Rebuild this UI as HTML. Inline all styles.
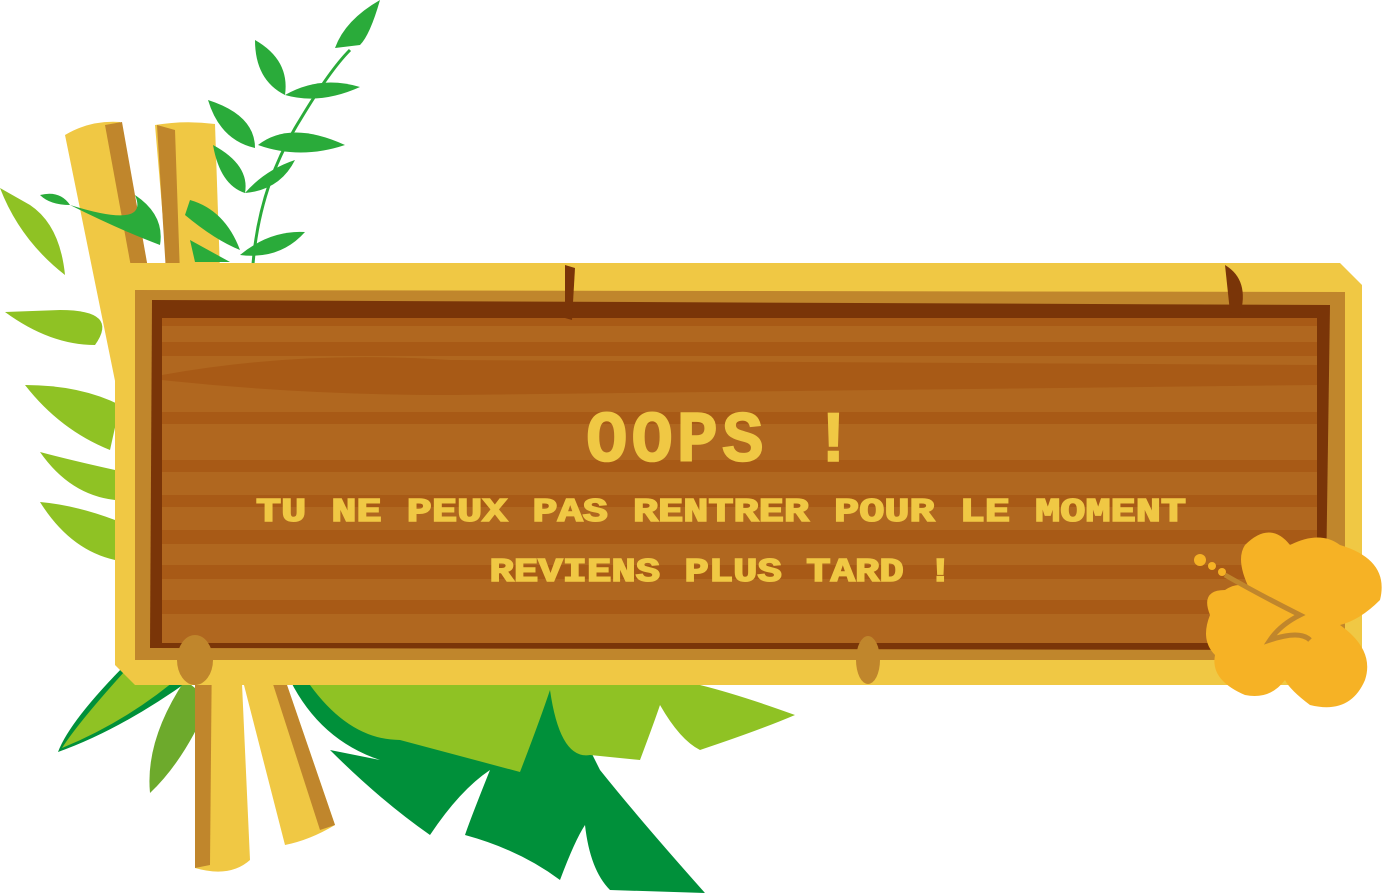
<!DOCTYPE html>
<html><head><meta charset="utf-8"><style>
html,body{margin:0;padding:0;background:#fff;width:1386px;height:896px;overflow:hidden}
svg{display:block}
text{font-family:"Liberation Mono","DejaVu Sans Mono",monospace;font-weight:bold;fill:#f0c844;stroke:#f0c844;stroke-width:1.5;text-anchor:middle}
</style></head><body>
<svg width="1386" height="896" viewBox="0 0 1386 896">
<path d="M290 680 Q320 740 380 760 L330 750 Q380 800 430 835 Q460 790 490 770 Q470 820 465 835 Q520 850 560 880 Q575 840 585 825 Q590 870 610 890 L705 893 Q640 820 600 770 Q580 730 560 690 Z" fill="#00903a"/>
<path d="M310 685 Q350 740 400 740 L520 772 Q540 720 550 690 Q560 760 590 755 L640 760 Q655 720 660 705 Q680 740 700 750 Q760 730 795 715 Q740 695 700 685 Z" fill="#8fc224"/>
<path d="M130 660 Q70 720 58 752 Q120 730 190 680 Z" fill="#00903a"/>
<path d="M135 660 Q80 720 62 748 Q130 720 185 672 Z" fill="#8fc224"/>
<path d="M185 680 Q145 740 150 793 Q185 760 210 700 Z" fill="#6daa2c"/>
<path d="M0 188 Q20 240 65 275 Q60 225 30 205 Z" fill="#8fc224"/>
<path d="M5 312 Q50 345 95 345 Q120 310 60 310 Z" fill="#8fc224"/>
<path d="M25 385 Q60 430 110 450 L120 405 Q80 385 25 385 Z" fill="#8fc224"/>
<path d="M40 452 Q70 495 115 500 L115 470 Q70 460 40 452 Z" fill="#8fc224"/>
<path d="M40 502 Q70 550 115 560 L115 520 Q75 505 40 502 Z" fill="#8fc224"/>
<path d="M65 135 Q90 120 120 122 L175 420 L125 430 Z" fill="#f0c844"/>
<path d="M105 125 L122 122 L175 420 L160 425 Z" fill="#c0862c"/>
<path d="M155 125 Q185 120 215 124 L225 420 L180 420 Z" fill="#f0c844"/>
<path d="M157 125 L175 130 L185 420 L175 420 Z" fill="#c0862c"/>
<path d="M195 640 L240 640 L250 860 Q230 878 195 868 Z" fill="#f0c844"/>
<path d="M195 640 L212 640 L210 865 L195 868 Z" fill="#c0862c"/>
<path d="M235 650 L275 650 L335 825 Q310 840 285 845 Z" fill="#f0c844"/>
<path d="M262 650 L275 650 L335 825 L320 830 Z" fill="#c0862c"/>
<g fill="#2aab3a">
<path d="M252 300 Q250 200 300 120 Q330 70 350 50" stroke="#2aab3a" stroke-width="3" fill="none"/>
<path d="M335 48 Q345 20 380 0 Q370 35 360 45 Z"/>
<path d="M255 40 Q255 80 285 95 Q290 60 255 40 Z"/>
<path d="M285 95 Q320 75 360 87 Q320 105 285 95 Z"/>
<path d="M208 100 Q220 140 255 148 Q255 115 208 100 Z"/>
<path d="M258 145 Q290 120 345 145 Q300 160 258 145 Z"/>
<path d="M213 145 Q220 185 245 193 Q250 165 213 145 Z"/>
<path d="M245 193 Q265 170 295 160 Q280 190 245 193 Z"/>
<path d="M240 255 Q270 230 305 232 Q280 260 240 255 Z"/>
<path d="M40 195 Q60 190 70 205 Q50 205 40 195 Z"/>
<path d="M70 205 Q120 230 160 245 Q165 215 135 195 Q150 230 70 205 Z"/>
<path d="M185 215 Q215 240 240 250 Q225 210 190 200 Z"/>
<path d="M190 240 L230 262 L195 262 Z"/>
</g>
<path d="M130 263 L1340 263 L1362 285 L1362 662 L1340 685 L135 685 L115 665 L115 285 Z" fill="#f0c844"/>
<path d="M135 290 L1345 292 L1345 660 L135 660 Z" fill="#c0862c"/>
<path d="M152 300 L1330 305 L1325 650 L150 648 Z" fill="#7a3508"/>
<rect x="162" y="318" width="1155" height="325" fill="#b0671f"/>
<g fill="#a85a16">
<rect x="162" y="342" width="1155" height="14"/>
<path d="M162 375 Q300 350 450 360 L1317 365 L1317 385 L450 395 Q300 395 162 380 Z"/>
<rect x="162" y="412" width="1155" height="12"/>
<rect x="162" y="460" width="1155" height="12"/>
<rect x="162" y="495" width="1155" height="12"/>
<rect x="162" y="530" width="1155" height="14"/>
<rect x="162" y="565" width="1155" height="14"/>
<rect x="162" y="600" width="1155" height="14"/>
</g>
<rect x="162" y="318" width="1155" height="8" fill="#a85a16"/>
<path d="M565 265 L575 268 L572 320 L565 318 Z" fill="#7a3508"/>
<path d="M1225 265 Q1250 280 1240 315 L1230 312 Z" fill="#7a3508"/>
<ellipse cx="195" cy="660" rx="18" ry="25" fill="#c0862c"/>
<ellipse cx="868" cy="660" rx="12" ry="24" fill="#c0862c"/>
<g fill="#f6b225">
<path d="M1245 545 Q1270 520 1290 545 Q1320 530 1340 545 Q1390 560 1380 600 Q1360 620 1340 625 Q1375 650 1365 680 Q1350 715 1310 705 Q1290 690 1285 680 Q1270 700 1245 695 Q1210 680 1215 655 Q1200 640 1210 615 Q1200 590 1225 590 Q1240 580 1250 590 Q1235 560 1245 545 Z"/>
<circle cx="1200" cy="560" r="6"/><circle cx="1212" cy="566" r="4"/><circle cx="1222" cy="572" r="4"/>
</g>
<path d="M1225 575 Q1260 595 1300 615 Q1280 625 1270 640 Q1300 630 1310 640" stroke="#c0862c" stroke-width="5" fill="none"/>
<text x="722" y="461" font-size="72" letter-spacing="4" textLength="272" lengthAdjust="spacingAndGlyphs">OOPS !</text>
<text x="721" y="521" font-size="33" textLength="930" lengthAdjust="spacingAndGlyphs">TU NE PEUX PAS RENTRER POUR LE MOMENT</text>
<text x="721" y="581" font-size="33" textLength="463" lengthAdjust="spacingAndGlyphs">REVIENS PLUS TARD !</text>
</svg>
</body></html>
